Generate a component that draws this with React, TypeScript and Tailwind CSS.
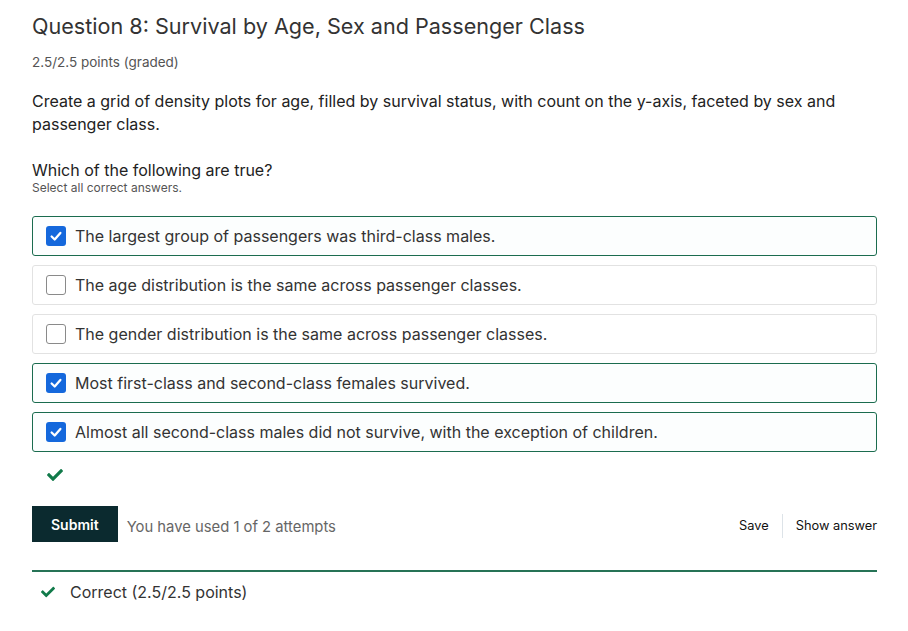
import React, { useState } from "react";
import { FaCheck } from "react-icons/fa";

const OPTIONS = [
  { text: "The largest group of passengers was third-class males.", checked: true },
  { text: "The age distribution is the same across passenger classes.", checked: false },
  { text: "The gender distribution is the same across passenger classes.", checked: false },
  { text: "Most first-class and second-class females survived.", checked: true },
  { text: "Almost all second-class males did not survive, with the exception of children.", checked: true },
];

function Checkbox({ checked }: { checked: boolean }) {
  if (checked) {
    return (
      <span className="w-[20px] h-[20px] rounded-[3px] bg-[#1468dc] flex items-center justify-center shrink-0">
        <svg width="14" height="14" viewBox="0 0 16 16">
          <path d="M3 8.5 L6.5 12 L13 4.5" fill="none" stroke="white" strokeWidth="2.6" strokeLinecap="round" strokeLinejoin="round" />
        </svg>
      </span>
    );
  }
  return <span className="w-[20px] h-[20px] rounded-[3px] border border-[#8a8a8a] bg-white shrink-0" />;
}

export default function App() {
  const [opts] = useState(OPTIONS);

  return (
    <div className="w-[908px] h-[631px] bg-white pl-8 pr-[31px] pt-[12px] font-['Inter',sans-serif] text-[#313131]">
      <h2 className="text-[21.6px] leading-[28px] text-[#333]">Question 8: Survival by Age, Sex and Passenger Class</h2>
      <div className="mt-[14px] text-[13.5px] leading-[16px] text-[#545454]">2.5/2.5 points (graded)</div>

      <p className="mt-[20px] text-[16px] leading-[23px] text-[#222] pr-[30px]">
        Create a grid of density plots for age, filled by survival status, with count on the y-axis, faceted by sex and passenger class.
      </p>

      <div className="mt-[24px] text-[16px] leading-[20px] text-[#222]">Which of the following are true?</div>
      <div className="text-[12px] leading-[15px] text-[#555]">Select all correct answers.</div>

      <div className="mt-[21px] flex flex-col gap-[9px]">
        {opts.map((o) => (
          <label
            key={o.text}
            className={`h-[40px] flex items-center gap-[9px] pl-[13px] rounded-[3px] border ${
              o.checked ? "border-[#1b6c4f] bg-[#fcfefe]" : "border-[#e2e2e2] bg-white"
            }`}
          >
            <Checkbox checked={o.checked} />
            <span className="text-[16px] text-[#333]">{o.text}</span>
          </label>
        ))}
      </div>

      <div className="mt-[15px] pl-[15px] h-[16px] flex items-center">
        <FaCheck className="text-[#117a4a] w-[16px] h-[16px]" />
      </div>

      <div className="mt-[23px] flex items-center">
        <button className="h-[36px] px-[19px] bg-[#0b2a2f] text-white text-[14px] font-semibold">Submit</button>
        <span className="ml-[9px] mt-[6px] text-[14.8px] text-[#666]">You have used 1 of 2 attempts</span>
        <div className="ml-auto mt-[3px] flex items-center text-[12.8px] text-[#111]">
          <span>Save</span>
          <span className="mx-[13px] w-px h-[24px] bg-[#dde3e8]" />
          <span>Show answer</span>
        </div>
      </div>

      <div className="mt-[28px] border-t-2 border-[#267356]" />
      <div className="mt-[8px] flex items-center pl-[9px]">
        <FaCheck className="text-[#117a4a] w-[14px] h-[14px]" />
        <span className="ml-[15px] text-[16px] text-[#333]">Correct (2.5/2.5 points)</span>
      </div>
    </div>
  );
}
